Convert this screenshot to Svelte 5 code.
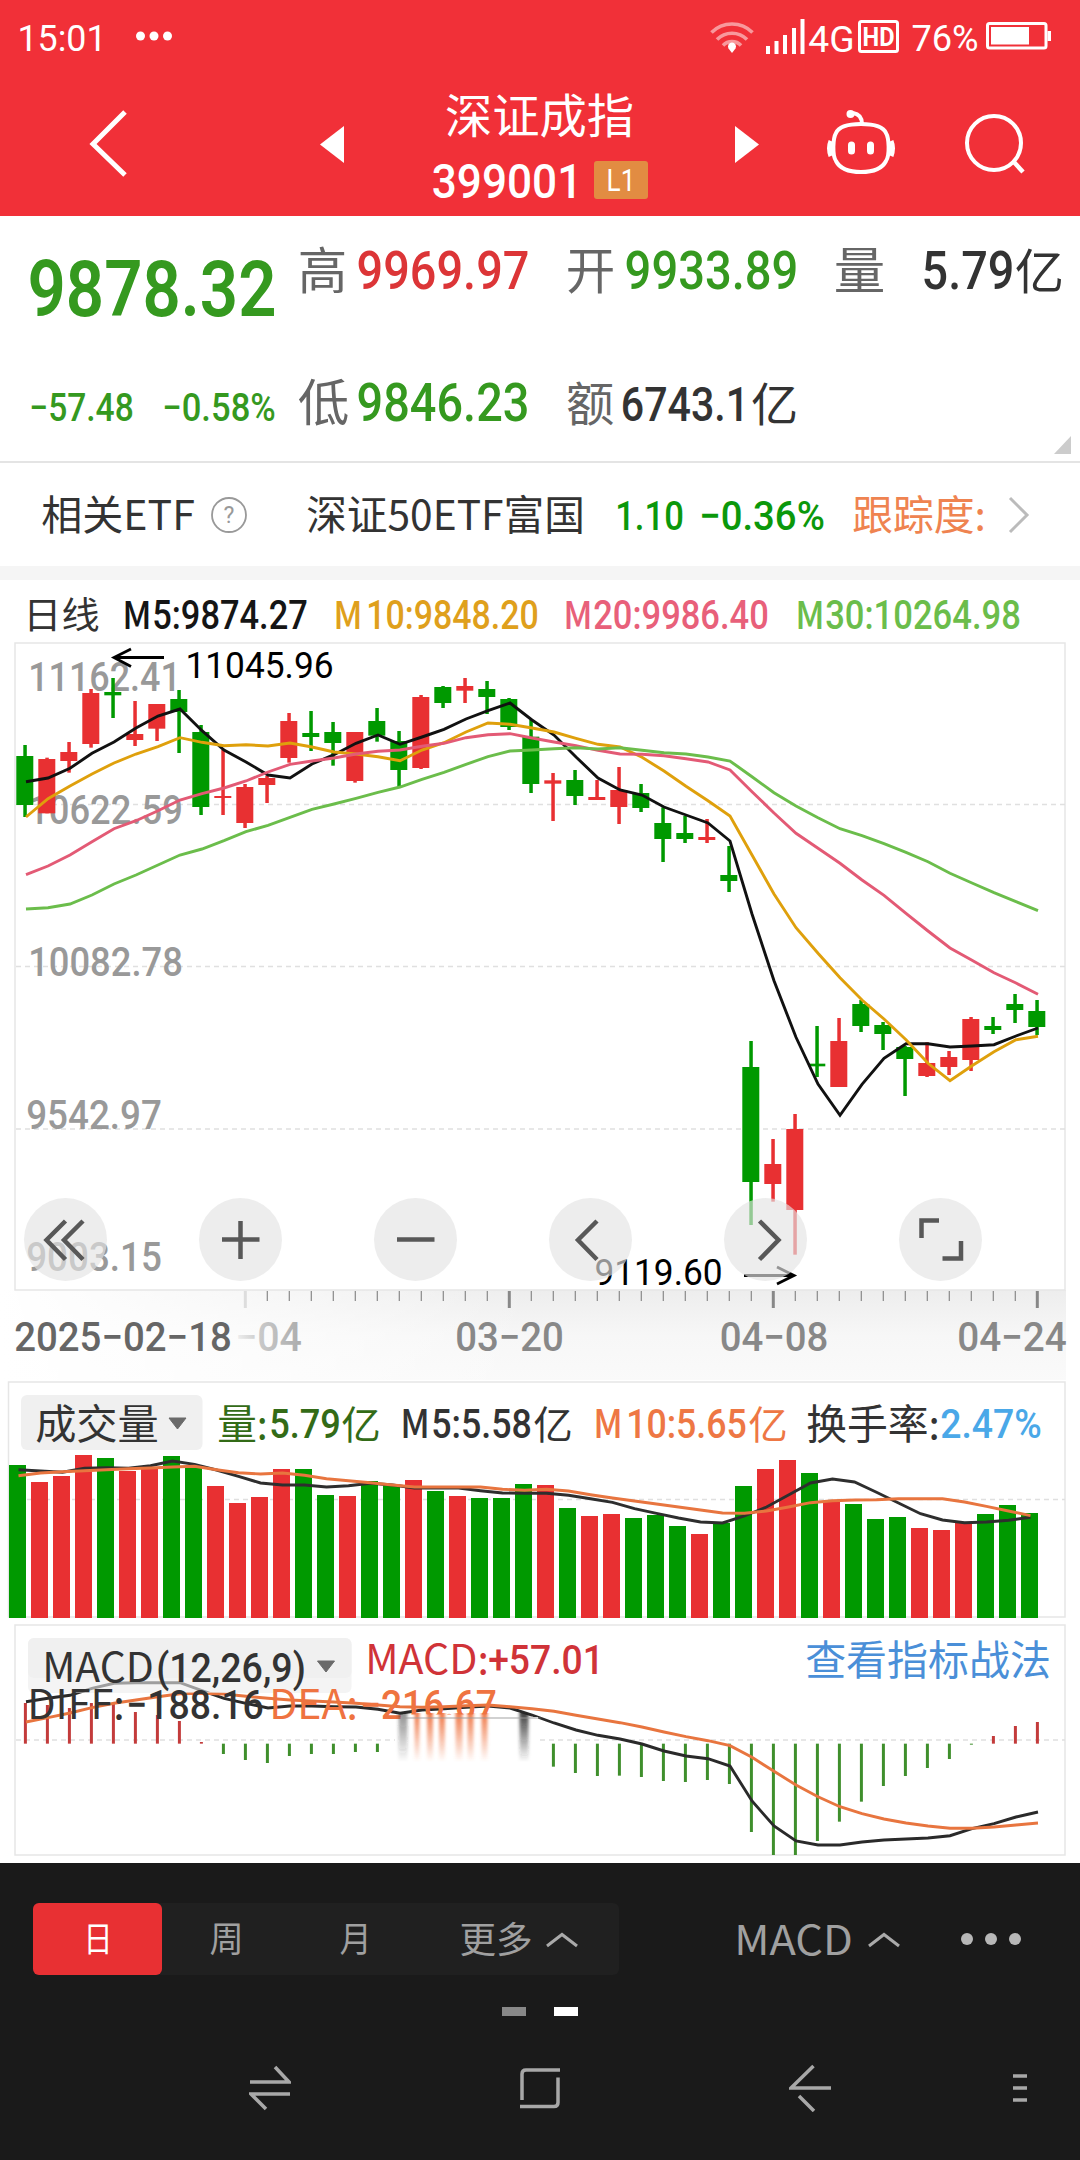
<script>
  const PITCH = 22;
  const RED = '#e83032';
  const GREEN = '#009900';

  // Candles: [direction, high, low, body top, body bottom], in thirds of a pixel below the legend
  const candles = [
    ['g', 525, 741, 558, 705], ['r', 563, 730, 567, 730], ['r', 516, 608, 546, 573], ['r', 357, 533, 369, 522],
    ['g', 324, 444, 366, 376], ['r', 393, 528, 492, 510], ['r', 402, 513, 402, 476], ['g', 360, 549, 387, 426],
    ['g', 465, 735, 486, 711], ['r', 540, 735, 678, 684], ['r', 642, 774, 651, 759], ['r', 618, 699, 624, 645],
    ['r', 429, 578, 453, 564], ['g', 423, 543, 489, 501], ['g', 456, 587, 486, 519], ['r', 486, 638, 486, 633],
    ['g', 414, 515, 453, 497], ['g', 483, 652, 513, 600], ['r', 375, 597, 381, 594], ['g', 348, 414, 351, 399],
    ['r', 324, 399, 348, 362], ['g', 333, 432, 357, 381], ['g', 384, 480, 387, 471], ['g', 450, 669, 500, 642],
    ['r', 609, 753, 631, 641], ['g', 600, 705, 630, 678], ['r', 630, 690, 681, 690], ['r', 591, 762, 660, 711],
    ['g', 642, 726, 669, 714], ['g', 712, 876, 759, 807], ['g', 738, 819, 789, 807], ['r', 747, 819, 801, 810],
    ['g', 828, 966, 915, 933], ['g', 1413, 1965, 1491, 1836], ['r', 1707, 1895, 1782, 1842], ['r', 1632, 2054, 1677, 1920],
    ['g', 1368, 1521, 1481, 1489], ['r', 1344, 1551, 1413, 1551], ['g', 1290, 1386, 1302, 1368], ['g', 1356, 1440, 1365, 1392],
    ['g', 1428, 1578, 1431, 1467], ['r', 1417, 1521, 1479, 1518], ['r', 1443, 1515, 1461, 1491], ['r', 1341, 1503, 1347, 1470],
    ['g', 1341, 1392, 1368, 1380], ['g', 1272, 1359, 1302, 1320], ['g', 1290, 1395, 1323, 1371]
  ];

  const averages = [
    { color: '#111', v: [635, 624, 595, 550, 516, 474, 438, 417, 482, 540, 576, 615, 624, 582, 554, 520, 495, 523, 501, 478, 447, 422, 399, 450, 495, 561, 624, 660, 675, 711, 735, 759, 813, 1032, 1232, 1402, 1542, 1636, 1543, 1465, 1421, 1421, 1431, 1428, 1424, 1398, 1374] },
    { color: '#dfa00c', v: [741, 686, 648, 612, 579, 552, 530, 503, 517, 527, 524, 528, 519, 531, 546, 552, 560, 572, 540, 518, 486, 459, 463, 474, 486, 505, 523, 531, 562, 603, 649, 692, 738, 855, 972, 1073, 1150, 1223, 1290, 1347, 1409, 1480, 1532, 1487, 1445, 1409, 1399] },
    { color: '#e35a75', v: [914, 888, 855, 815, 776, 752, 722, 690, 671, 654, 633, 606, 583, 573, 564, 552, 544, 540, 529, 520, 503, 494, 491, 504, 516, 527, 541, 552, 553, 557, 566, 576, 600, 665, 729, 790, 835, 880, 930, 976, 1030, 1083, 1134, 1171, 1208, 1239, 1273] },
    { color: '#6bbd4b', v: [1017, 1013, 1002, 975, 942, 915, 885, 855, 837, 812, 785, 766, 742, 718, 702, 685, 667, 651, 628, 607, 583, 560, 543, 540, 536, 533, 537, 533, 541, 548, 552, 561, 573, 620, 668, 708, 743, 776, 797, 821, 847, 875, 910, 939, 968, 995, 1022] }
  ];

  const volumeTops = [285, 336, 318, 255, 264, 303, 297, 258, 291, 348, 399, 381, 297, 297, 375, 378, 333, 345, 330, 363, 378, 384, 384, 342, 345, 414, 438, 432, 444, 435, 468, 492, 459, 348, 297, 270, 309, 393, 402, 447, 441, 474, 480, 459, 432, 405, 429];
  const volumeDirs = 'grrrgrrggrrrrggrggrgrgggrgrrgggrggrrgrgggrrrggg';
  const volumeLines = [
    { color: '#2e2e2e', v: [299, 303, 307, 295, 293, 295, 287, 273, 283, 300, 319, 339, 345, 345, 351, 347, 340, 345, 354, 353, 354, 362, 369, 370, 370, 376, 386, 397, 416, 430, 444, 456, 459, 438, 411, 375, 339, 327, 336, 367, 399, 431, 450, 458, 456, 451, 442] },
    { color: '#e8753f', v: [317, 309, 305, 302, 299, 296, 294, 291, 289, 299, 308, 312, 309, 316, 326, 332, 338, 345, 351, 351, 351, 351, 358, 361, 358, 363, 374, 384, 393, 402, 411, 420, 429, 430, 423, 411, 398, 392, 390, 389, 386, 386, 386, 396, 409, 423, 437] }
  ];

  const macdBase = 371;
  const macdEnds = [249, 255, 264, 249, 252, 276, 285, 303, 366, 402, 420, 429, 408, 402, 402, 396, 396, null, null, null, null, null, null, null, 440, 459, 468, 467, 471, 483, 486, 480, 492, 636, 705, 705, 663, 605, 545, 498, 468, 444, 417, 374, 348, 318, 306];
  const diff = [245, 235, 226, 205, 190, 188, 188, 188, 212, 235, 250, 264, 258, 258, 260, 261, 268, 280, 270, 266, 262, 258, 264, 285, 309, 330, 346, 357, 372, 393, 408, 416, 438, 543, 618, 663, 675, 675, 666, 660, 657, 654, 647, 626, 611, 591, 576];
  const dea = [306, 293, 279, 263, 250, 240, 230, 221, 220, 222, 229, 235, 240, 243, 246, 250, 255, 260, 262, 260, 257, 255, 260, 266, 274, 286, 297, 308, 321, 336, 350, 362, 377, 412, 454, 495, 530, 560, 581, 597, 609, 618, 625, 625, 621, 615, 609];
  const streaks = [[403, 9, 'l'], [417, 5, 'o'], [430, 6, 'o'], [442, 6, 'o'], [459, 7, 'o'], [470.5, 6, 'o'], [484.5, 6, 'o'], [524, 9, 'k']];

  const ticks = Array.from({ length: 37 }, (_, i) => i + 10);
  const fill = (d) => (d === 'r' ? RED : GREEN);
  const line = (v, x0) => v.map((y, i) => `${(x0 + i * PITCH).toFixed(1)},${(y / 3).toFixed(1)}`).join(' ');
</script>

<!-- Text set to a given ink width; the box spans the capital height, so its bottom is the baseline -->
{#snippet fit(s, w, size, cls = '')}
  <svg class="fit {cls}" width={w} height={Math.round(size * 0.71)}>
    <text x={-0.045 * size} y={Math.round(size * 0.71)} font-size={size} textLength={w + 0.09 * size} lengthAdjust="spacingAndGlyphs">{s}</text>
  </svg>
{/snippet}

{#snippet label(s, x, y, w, size, cls = '')}
  <text class={cls} x={x - 0.045 * size} {y} font-size={size} textLength={w + 0.09 * size} lengthAdjust="spacingAndGlyphs">{s}</text>
{/snippet}

<main>
  <header>
    <div class="status">
      {@render fit('15:01', 86, 36, 'clock')}
      <svg class="more" width="36" height="10"><circle cx="4.5" cy="5" r="4.5" /><circle cx="18" cy="5" r="4.5" /><circle cx="31.5" cy="5" r="4.5" /></svg>
      <svg class="wifi" width="44" height="35" viewBox="0 0 44 35">
        <g fill="none" stroke="#fff" stroke-width="3.6" opacity=".5">
          <path d="M1.5 13.500A29 29 0 0 1 42.500 13.500" /><path d="M7 20.500A21 21 0 0 1 37 20.500" /><path d="M13 26.500A12.500 12.500 0 0 1 31 26.500" />
        </g>
        <path d="M22 34l-3.500-4.500a4 4 0 1 1 7 0z" fill="#fff" />
      </svg>
      <svg class="signal" width="39" height="35" viewBox="0 0 39 35"><path d="M2 27v8M10.500 22v13M19 16v19M28 9v26M36.500 0v35" stroke="#fff" stroke-width="4" /></svg>
      {@render fit('4G', 43, 37, 'g4')}
      <svg class="hd" width="41" height="33" viewBox="0 0 41 33">
        <rect x="1.500" y="1.500" width="38" height="30" rx="2" fill="none" stroke="#fff" stroke-width="3" />
        <text x="4.500" y="25.500" font-size="26" textLength="32" lengthAdjust="spacingAndGlyphs">HD</text>
      </svg>
      {@render fit('76%', 64, 36, 'pct')}
      <svg class="battery" width="66" height="28" viewBox="0 0 66 28">
        <rect x="1.500" y="1.500" width="58.500" height="24.500" rx="2" fill="none" stroke="#fff" stroke-width="3" />
        <path d="M5 5h38v17.500H5zM61.500 9h3.500v10h-3.500z" fill="#fff" />
      </svg>
    </div>
    <div class="title">
      <svg class="back" width="40" height="68" viewBox="0 0 40 68"><path d="M36 2L4 34l32 31" fill="none" stroke="#fff" stroke-width="5" /></svg>
      <svg class="prev" width="24" height="37"><path d="M24 0v37L0 18.500z" fill="#fff" /></svg>
      <div class="name">
        {@render fit('深证成指', 185, 47, 'cjk')}
        <div class="code">
          {@render fit('399001', 146, 49, 'num')}
          <span class="level">{@render fit('L1', 26, 31)}</span>
        </div>
      </div>
      <svg class="next" width="24" height="37"><path d="M0 0v37l24-18.500z" fill="#fff" /></svg>
      <svg class="robot" width="70" height="66" viewBox="0 0 70 66" fill="none" stroke="#fff" stroke-width="4">
        <path d="M35 15c12 0 22 2 25 9 3 5 4 22 0 28-4 8-14 11-25 11s-21-3-25-11c-4-6-3-23 0-28 3-7 13-9 25-9z" />
        <path d="M36 15c0-7-3-10-9-11" />
        <circle cx="24.500" cy="5" r="4" fill="#fff" stroke="none" />
        <path d="M5 32q-3 7 0 15M65 32q3 7 0 15" stroke-width="5" />
        <path d="M25.500 36v6M44.500 36v6" stroke-width="7" stroke-linecap="round" />
      </svg>
      <svg class="search" width="62" height="62" viewBox="0 0 62 62" fill="none" stroke="#fff" stroke-width="4"><circle cx="30" cy="30" r="27" /><path d="M49 48l10 11" stroke-width="4.500" /></svg>
    </div>
  </header>

  <section class="quote">
    <div class="cell price green">{@render fit('9878.32', 242, 77, 'num heavy')}</div>
    <div class="cell grey">{@render fit('高', 45, 50, 'cjk')}</div>
    <div class="cell red">{@render fit('9969.97', 168, 53, 'num')}</div>
    <div class="cell grey">{@render fit('开', 45, 50, 'cjk')}</div>
    <div class="cell green">{@render fit('9933.89', 169, 53, 'num')}</div>
    <div class="cell grey">{@render fit('量', 47, 50, 'cjk')}</div>
    <div class="cell pair">{@render fit('5.79', 88, 53, 'num')}{@render fit('亿', 45, 48, 'cjk')}</div>

    <div class="cell low pair green change">{@render fit('−57.48', 101, 39, 'num')}{@render fit('−0.58%', 110, 39, 'num')}</div>
    <div class="cell low grey">{@render fit('低', 47, 50, 'cjk')}</div>
    <div class="cell low green">{@render fit('9846.23', 168, 53, 'num')}</div>
    <div class="cell low grey">{@render fit('额', 44, 47, 'cjk')}</div>
    <div class="cell low pair amount">{@render fit('6743.1', 124, 49, 'num')}{@render fit('亿', 43, 46, 'cjk')}</div>
    <svg class="fold" width="17" height="18"><path d="M17 0v18H0z" fill="#ccc" /></svg>
  </section>

  <section class="etf">
    {@render fit('相关ETF', 150, 41, 'cjk')}
    <svg class="help" width="38" height="38" viewBox="0 0 38 38"><circle cx="19" cy="19" r="17" fill="none" stroke="#999" stroke-width="1.800" /><text x="19" y="27" font-size="23" text-anchor="middle">?</text></svg>
    {@render fit('深证50ETF富国', 275, 41, 'cjk fund')}
    {@render fit('1.10', 65, 41, 'num up')}
    {@render fit('−0.36%', 122, 41, 'num rate')}
    {@render fit('跟踪度:', 130, 41, 'cjk track')}
    <svg class="go" width="22" height="38"><path d="M2 2l17 17L2 36" fill="none" stroke="#bbb" stroke-width="3" /></svg>
  </section>

  <section class="legend">
    {@render fit('日线', 73, 37, 'cjk')}
    <div class="ma m5">{@render fit('M', 26, 38, 'cjk mid')}{@render fit('5:9874.27', 152, 40, 'num')}</div>
    <div class="ma m10">{@render fit('M', 26, 38, 'cjk mid')}{@render fit('10:9848.20', 169, 40, 'num')}</div>
    <div class="ma m20">{@render fit('M', 26, 38, 'cjk mid')}{@render fit('20:9986.40', 172, 40, 'num')}</div>
    <div class="ma m30">{@render fit('M', 26, 38, 'cjk mid')}{@render fit('30:10264.98', 192, 40, 'num')}</div>
  </section>

  <svg class="chart" width="1080" height="740" viewBox="0 640 1080 740">
    <defs>
      <linearGradient id="axisX"><stop offset="0" stop-color="#fff" /><stop offset=".3" stop-color="#fff" stop-opacity=".45" /><stop offset=".5" stop-color="#fff" stop-opacity="0" /></linearGradient>
      <linearGradient id="axisY" x2="0" y2="1"><stop offset="0" stop-color="#ededed" /><stop offset=".5" stop-color="#f7f7f7" /><stop offset="1" stop-color="#fafafa" /></linearGradient>
      <linearGradient id="dateFade" gradientUnits="userSpaceOnUse" x1="237" x2="305"><stop offset="0" stop-color="#eee" /><stop offset=".35" stop-color="#c8c8c8" /><stop offset="1" stop-color="#aaa" /></linearGradient>
    </defs>
    <rect x="0" y="1290" width="1066" height="92" fill="url(#axisY)" />
    <rect x="0" y="1290" width="1066" height="92" fill="url(#axisX)" />
    <rect x="15" y="643" width="1050" height="647" fill="#fff" stroke="#e6e6e6" stroke-width="1.500" />
    <path class="dash" d="M16 804.500H1065M16 966.500H1065M16 1129H1065" />
    <g class="num axis">
      {@render label('11162.41', 30, 691, 149, 40.5)}
      {@render label('10622.59', 30, 824, 151, 40.5)}
      {@render label('10082.78', 30, 976, 151, 40.5)}
      {@render label('9542.97', 28, 1129, 132, 40.5)}
      {@render label('9003.15', 28, 1271, 132, 40.5)}
    </g>
    <g transform="translate(0 570)">
      {#each candles as [d, hi, lo, top, bottom], i}
        <rect x={23.3 + i * PITCH} y={hi / 3} width="3.500" height={(lo - hi) / 3} fill={fill(d)} />
        <rect x={16.3 + i * PITCH} y={top / 3} width="17" height={(bottom - top) / 3} fill={fill(d)} />
      {/each}
      {#each averages as a}
        <polyline points={line(a.v, 26)} fill="none" stroke={a.color} stroke-width="2.900" />
      {/each}
    </g>
    <g class="mark">
      {@render label('11045.96', 187, 678, 145, 36)}
      {@render label('9119.60', 596, 1285, 125, 36)}
    </g>
    <path d="M164 657.500H114M131 649l-17 8.500 17 9M744 1275.500h50M777 1267l17 8.500-17 8.500" fill="none" stroke="#000" stroke-width="2.800" />

    <g fill="#e3e3e3" fill-opacity=".65">
      {#each [65.5, 240.5, 415.5, 590.5, 765.5, 940.5] as cx}
        <circle {cx} cy="1239.500" r="41.500" />
      {/each}
    </g>
    <path d="M65.500 1221l-19 19 19 19.500M83 1221l-19 19 19 19.500M222 1239.500h37.500M240.500 1221v38M397 1239.500h37.500M597 1221l-19 19 19 19.500M759.500 1221l19 19-19 19.500M939 1220.500h-17.500v17.500M961 1241v17.500h-18.500" fill="none" stroke="#585858" stroke-width="4.500" />

    {#each ticks as i}
      {@const major = (i - 10) % 12 === 0}
      <path d="M{25.300 + i * PITCH} 1291v{major ? 17 : 10}" stroke={i === 10 ? '#ddd' : '#888'} stroke-width={major ? 3 : 1.200} />
    {/each}
    <g class="num date">
      {@render label('−04', 237, 1351, 63, 40.5, 'faded')}
      {@render label('2025−02−18', 16, 1351, 214, 40.5, 'first')}
      {@render label('03−20', 457, 1351, 105, 40.5)}
      {@render label('04−08', 721.5, 1351, 105, 40.5)}
      {@render label('04−24', 959, 1351, 106, 40.5)}
    </g>
  </svg>

  <svg class="chart" width="1080" height="241" viewBox="0 1380 1080 241">
    <rect x="8.500" y="1382" width="1056.500" height="235" fill="#fff" stroke="#e6e6e6" stroke-width="1.500" />
    <path class="dash" d="M9 1499.500H1065" />
    <g transform="translate(0 1370)">
      {#each volumeTops as t, i}
        <rect x={9 + i * PITCH} y={t / 3} width="17" height={248 - t / 3} fill={fill(volumeDirs[i])} />
      {/each}
      {#each volumeLines as l}
        <polyline points={line(l.v, 18.5)} fill="none" stroke={l.color} stroke-width="2.900" />
      {/each}
    </g>
    <rect x="21" y="1395" width="181.500" height="55" rx="6" fill="#f0f0f0" />
    <path d="M169 1418h17l-8.500 11z" fill="#6a6a6a" stroke="#6a6a6a" stroke-linejoin="round" />
    <g fill="#333">{@render label('成交量', 37, 1439, 120, 41, 'cjk')}</g>
    <g fill="#336b17">
      {@render label('量:', 219, 1439, 47, 41, 'cjk')}
      {@render label('5.79', 271, 1438, 68, 41, 'num')}
      {@render label('亿', 343, 1439, 36, 39, 'cjk')}
    </g>
    <g fill="#333">
      {@render label('M', 402, 1438, 26, 40, 'cjk mid')}
      {@render label('5:5.58', 433, 1438, 97, 41, 'num')}
      {@render label('亿', 535, 1439, 36, 39, 'cjk')}
    </g>
    <g fill="#ee7744">
      {@render label('M', 595, 1438, 26, 40, 'cjk mid')}
      {@render label('10:5.65', 628, 1438, 117, 41, 'num')}
      {@render label('亿', 750, 1439, 36, 39, 'cjk')}
    </g>
    <g fill="#333">{@render label('换手率:', 808, 1439, 130, 41, 'cjk')}</g>
    <g fill="#4aa8e8">{@render label('2.47%', 942, 1438, 98, 41, 'num')}</g>
  </svg>

  <svg class="chart" width="1080" height="242" viewBox="0 1621 1080 242">
    <defs>
      <linearGradient id="sk" x2="0" y2="1"><stop offset="0" stop-color="#222" stop-opacity=".85" /><stop offset="1" stop-color="#222" stop-opacity="0" /></linearGradient>
      <linearGradient id="sl" x2="0" y2="1"><stop offset="0" stop-color="#222" stop-opacity=".5" /><stop offset="1" stop-color="#222" stop-opacity="0" /></linearGradient>
      <linearGradient id="so" x2="0" y2="1"><stop offset="0" stop-color="#ef7340" stop-opacity=".95" /><stop offset="1" stop-color="#ef7340" stop-opacity="0" /></linearGradient>
      <filter id="soft" x="-1" width="3" y="-.1" height="1.200"><feGaussianBlur stdDeviation="1.600 .6" /></filter>
    </defs>
    <rect x="15" y="1625" width="1050" height="230" fill="#fff" stroke="#e6e6e6" stroke-width="1.500" />
    <path class="dash" d="M16 1740H395M540 1740H1065" />
    <g transform="translate(0 1620)">
      {#each macdEnds as end, i}
        {#if end !== null}
          <path d="M{25.400 + i * PITCH} {macdBase / 3}V{end / 3}" stroke={end < macdBase ? '#c33b3b' : '#3f8f2c'} stroke-width="3" />
        {/if}
      {/each}
      <polyline points={line(diff, 26)} fill="none" stroke="#2a2a2a" stroke-width="2.900" />
    </g>
    <rect x="397" y="1717" width="141" height="30" fill="#fff" />
    <g transform="translate(0 1620)">
      <polyline points={line(dea, 26)} fill="none" stroke="#e8753f" stroke-width="2.900" />
    </g>
    <rect x="28" y="1638" width="323.500" height="55" rx="6" fill="#ededed" fill-opacity=".6" />
    <rect x="28" y="1638" width="323.500" height="40" rx="6" fill="#f0f0f0" />
    <path d="M317.500 1661h17l-8.500 11z" fill="#6a6a6a" stroke="#6a6a6a" stroke-linejoin="round" />
    <g fill="#333">
      {@render label('MACD', 44, 1682, 108, 41, 'cjk')}
      {@render label('(12,26,9)', 158, 1682, 146, 41, 'num')}
      {@render label('DIFF:', 29, 1719, 94, 41, 'cjk')}
      {@render label('−188.16', 128, 1719, 134, 41, 'num')}
    </g>
    <g fill="#d03338">
      {@render label('MACD:', 367, 1674, 120, 41, 'cjk')}
      {@render label('+57.01', 490, 1674, 112, 41, 'num')}
    </g>
    <g fill="#ef7340">
      {@render label('DEA:', 271, 1719, 85, 41, 'cjk')}
      {@render label('−216.67', 362, 1719, 133, 41, 'num')}
    </g>
    <rect x="403" y="1714.500" width="100" height="7" fill="#fff" />
    <g filter="url(#soft)">
      {#each streaks as [x, w, tone]}
        <rect x={x - w / 2} y="1713" width={w} height="49" fill="url(#s{tone})" />
      {/each}
      <rect x="400" y="1717" width="140" height="2" fill="#999" opacity=".45" />
    </g>
    <g fill="#4a8fd8">{@render label('查看指标战法', 807, 1675, 242, 41, 'cjk')}</g>
  </svg>

  <footer>
    <div class="bar">
      <div class="tabs">
        <span class="tab active">{@render fit('日', 26, 35, 'cjk')}</span>
        <span class="tab">{@render fit('周', 31, 35, 'cjk')}</span>
        <span class="tab">{@render fit('月', 29, 35, 'cjk')}</span>
        <span class="tab wide">{@render fit('更多', 70, 36, 'cjk')}<svg width="34" height="16"><path d="M2 14L17 2.500 32 14" fill="none" stroke="#aaa" stroke-width="3" /></svg></span>
      </div>
      <div class="indicator">{@render fit('MACD', 115, 41, 'cjk')}<svg width="34" height="16"><path d="M2 14L17 2.500 32 14" fill="none" stroke="#aaa" stroke-width="3" /></svg></div>
      <svg class="dots" width="62" height="14" fill="#b8b8b8"><circle cx="7" cy="7" r="6" /><circle cx="31" cy="7" r="6" /><circle cx="55" cy="7" r="6" /></svg>
    </div>
    <div class="pages"><i></i><i class="on"></i></div>
    <nav>
      <svg width="42" height="46" viewBox="249 2065 42 46"><path d="M250 2082h39L275 2067M290 2094h-39l15 15" /></svg>
      <svg width="42" height="46" viewBox="519 2065 42 46"><path d="M560 2070h-34q-4 0-4 4v26M520 2106.500h34q4 0 4-4v-25" /></svg>
      <svg width="44" height="48" viewBox="788 2064 44 48"><path d="M830 2088h-40l22.500-22M798 2096l15 15" /></svg>
      <svg width="16" height="30" viewBox="1012 2073 16 30"><path d="M1013 2076h14M1013 2088h14M1013 2100h14" /></svg>
    </nav>
  </footer>
</main>

<style>
  :global(body) { background: #fff; }
  main {
    width: 1080px;
    height: 2160px;
    overflow: hidden;
    display: flex;
    flex-direction: column;
    color: #333;
    font-family: Roboto, "Noto Sans CJK SC", sans-serif;
  }
  svg { display: block; flex: none; }
  .fit { overflow: visible; fill: currentColor; }
  .num { font-family: Roboto, sans-serif; font-weight: 500; }
  .heavy { font-weight: 600; }
  .cjk { font-family: "Noto Sans CJK SC", sans-serif; font-weight: 400; }
  .mid { font-weight: 500; }

  header { height: 216px; background: #f13038; color: #fff; }
  .status { height: 72px; box-sizing: border-box; padding: 0 28px 0 19px; display: flex; align-items: center; fill: #fff; }
  .clock, .pct { margin-top: 3px; }
  .more { margin-left: 31px; }
  .wifi { margin-left: auto; }
  .signal { margin-left: 12px; }
  .g4 { margin-left: 5px; margin-top: 5px; }
  .hd { margin-left: 5px; font-weight: 700; }
  .pct { margin-left: 14px; }
  .battery { margin-left: 9px; }
  .title { height: 144px; display: flex; align-items: center; padding-left: 89px; }
  .prev { margin-left: 191px; }
  .name { width: 216px; margin-left: 90px; display: flex; flex-direction: column; gap: 30px; padding-top: 9px; }
  .name > :global(.cjk) { margin-left: 13px; }
  .code { display: flex; align-items: center; gap: 14px; }
  .level { width: 54px; height: 38px; margin-block: -2px; display: flex; align-items: center; justify-content: center; background: #e28c42; border-radius: 3px; }
  .next { margin-left: 85px; }
  .robot { margin-left: 67px; margin-top: -4px; }
  .search { margin-left: 68px; }

  .quote {
    height: 247px;
    box-sizing: border-box;
    position: relative;
    padding-left: 31px;
    display: grid;
    grid-template-columns: 269px 59px 209px 59px 209px 88px 150px;
    grid-template-rows: 100px 105px;
    align-items: end;
    border-bottom: 2px solid #e4e4e4;
  }
  .cell { padding-bottom: 27px; }
  .cell.price, .cell.low { padding-bottom: 0; }
  .pair { display: flex; align-items: flex-end; gap: 5px; }
  .change { gap: 32px; }
  .amount { gap: 6px; margin-left: -4px; }
  .green { color: #35991f; }
  .red { color: #dc3537; }
  .grey { color: #666; }
  .fold { position: absolute; right: 9px; bottom: 7px; }

  .etf { height: 103px; box-sizing: border-box; display: flex; align-items: center; padding: 1px 0 0 43px; }
  .help { margin-left: 17px; fill: #999; }
  .etf :global(.fund) { margin-left: 60px; }
  .etf :global(.up) { margin-left: 34px; color: #0b980b; }
  .etf :global(.rate) { margin-left: 19px; color: #0b980b; }
  .etf :global(.track) { margin-left: 31px; color: #ef8350; }
  .go { margin-left: 24px; }

  .legend { height: 74px; box-sizing: border-box; padding: 0 0 11px 25px; display: flex; align-items: flex-end; border-top: 14px solid #f5f5f5; }
  .ma { display: flex; align-items: flex-end; gap: 4px; }
  .m5 { margin-left: 26px; color: #151515; }
  .m10 { margin-left: 29px; gap: 7px; color: #dfa01c; }
  .m20 { margin-left: 28px; color: #e8607a; }
  .m30 { margin-left: 30px; color: #6bbd4b; }

  .chart { overflow: hidden; }
  .dash { fill: none; stroke: #e0e0e0; stroke-width: 1.3; stroke-dasharray: 5 4; }
  .axis { fill: #999; }
  .mark { fill: #000; }
  .date { fill: #888; }
  .date :global(.first) { fill: #666; }
  .date :global(.faded) { fill: url(#dateFade); }

  footer { height: 297px; background: #1a1a1a; color: #a0a0a0; }
  .bar { display: flex; align-items: center; height: 72px; padding: 40px 0 0 33px; }
  .tabs { width: 586px; height: 72px; display: flex; background: #202020; border-radius: 6px; }
  .tab { width: 129px; flex: none; display: flex; align-items: center; justify-content: center; padding-top: 1px; box-sizing: border-box; }
  .tab.active { background: #e83033; color: #fff; border-radius: 6px; }
  .tab.wide { width: 199px; gap: 14px; }
  .indicator { display: flex; align-items: center; gap: 16px; margin-left: 117px; padding-top: 2px; }
  .dots { margin-left: 59px; }
  .pages { display: flex; justify-content: center; gap: 28px; margin-top: 32px; }
  .pages i { width: 24px; height: 9px; background: #888; }
  .pages .on { background: #fff; }
  nav { display: flex; align-items: center; height: 48px; margin-top: 48px; padding-left: 249px; fill: none; stroke: #a8a8a8; stroke-width: 3.5; }
  nav svg + svg { margin-left: 228px; }
  nav svg:last-child { margin-left: 179px; }
</style>
